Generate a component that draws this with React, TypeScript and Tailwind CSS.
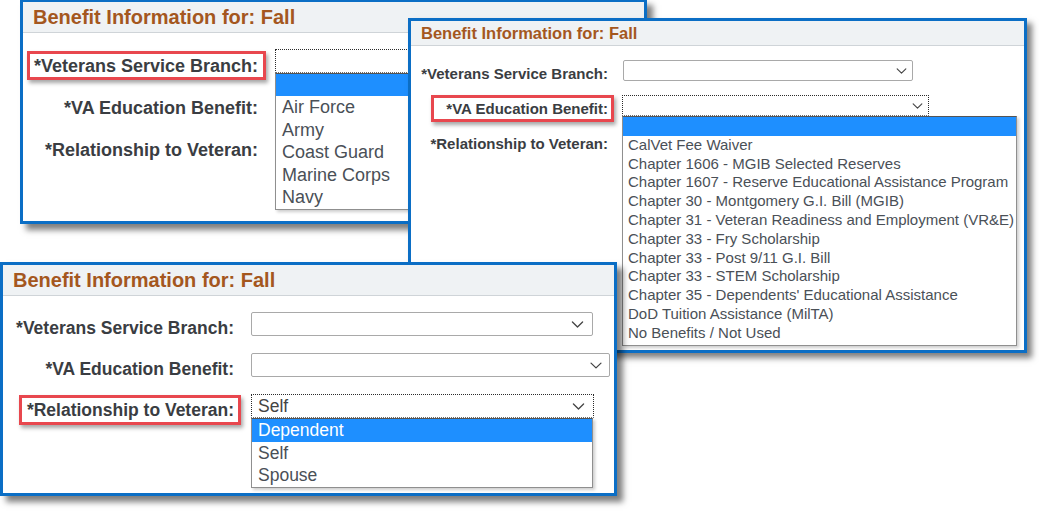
import React from 'react';

type LabelProps = {
  text: string;
  textClass: string;
  boxClass?: string;
};

// label text, optionally wrapped in the red callout box
const Label = ({ text, textClass, boxClass }: LabelProps) => (
  <span className={`relative inline-block font-bold text-[#3a3d42] whitespace-nowrap ${textClass}`}>
    {boxClass && (
      <span
        className={`absolute border-[3px] border-[#e8474e] shadow-[2px_3px_4px_rgba(0,0,0,0.35)] ${boxClass}`}
      />
    )}
    {text}
  </span>
);

const Chevron = ({ className }: { className: string }) => (
  <svg viewBox="0 0 14 8" className={className} fill="none">
    <polyline
      points="1.2,1.2 7,6.8 12.8,1.2"
      stroke="#444"
      strokeWidth="1.5"
      strokeLinecap="round"
      strokeLinejoin="round"
    />
  </svg>
);

type SelectProps = {
  className: string;
  focused?: boolean;
  value?: string;
  valueClass?: string;
  chevronClass: string;
};

const Select = ({ className, focused, value, valueClass, chevronClass }: SelectProps) => (
  <div
    className={`flex items-center justify-between bg-white ${
      focused ? 'border border-dotted border-[#2b2b2b] border-b-[#6b6b6b]' : 'border border-[#a9a9a9] rounded-[2px]'
    } ${className}`}
  >
    <span className={`text-[#444] ${valueClass ?? ''}`}>{value}</span>
    <Chevron className={chevronClass} />
  </div>
);

type ListProps = {
  items: string[];
  selected: string;
  className: string;
  rowClass: string;
};

const DropList = ({ items, selected, className, rowClass }: ListProps) => (
  <div
    className={`absolute left-0 z-10 bg-white border border-[#8f8f8f] border-t-[#555] shadow-[2px_2px_3px_rgba(0,0,0,0.2)] ${className}`}
  >
    <div className={`bg-[#1e8fff] text-white ${rowClass}`}>{selected || '\u00a0'}</div>
    {items.map((it, i) => (
      <div key={i} className={`text-[#4a5057] ${rowClass}`}>
        {it}
      </div>
    ))}
  </div>
);

const BENEFITS = [
  'CalVet Fee Waiver',
  'Chapter 1606 - MGIB Selected Reserves',
  'Chapter 1607 - Reserve Educational Assistance Program',
  'Chapter 30 - Montgomery G.I. Bill (MGIB)',
  'Chapter 31 - Veteran Readiness and Employment (VR&E)',
  'Chapter 33 - Fry Scholarship',
  'Chapter 33 - Post 9/11 G.I. Bill',
  'Chapter 33 - STEM Scholarship',
  "Chapter 35 - Dependents' Educational Assistance",
  'DoD Tuition Assistance (MilTA)',
  'No Benefits / Not Used',
];

export default function App() {
  return (
    <div className="relative w-[1039px] h-[512px] overflow-hidden bg-white font-['Liberation_Sans',Arial,sans-serif]">
      {/* panel 1 - branch list open */}
      <div className="absolute isolate left-[20px] top-[-1px] w-[627px] h-[225px] border-[3px] border-[#0b6ec5] bg-white shadow-[6px_6px_6px_rgba(0,0,0,0.5)]">
        <div className="h-[31px] bg-[#eff2f4] border-b border-[#cfd4d8] pl-[10px] flex items-center">
          <span className="text-[20px] font-bold text-[#a4571e]">Benefit Information for: Fall</span>
        </div>
        <div className="pt-[16px] flex flex-col gap-[18px]">
          <div className="flex h-[24px]">
            <div className="w-[235px] shrink-0 text-right mt-[6px]">
              <Label
                text="*Veterans Service Branch:"
                textClass="text-[18px] leading-[20px]"
                boxClass="left-[-7px] right-[-8px] top-[-5px] bottom-[-4px]"
              />
            </div>
            <div className="relative ml-[17px]">
              <Select focused className="w-[330px] h-[24px]" chevronClass="w-[13px] h-[7px] mr-[8px]" />
              <DropList
                items={['Air Force', 'Army', 'Coast Guard', 'Marine Corps', 'Navy']}
                selected=""
                className="top-[24px] w-[330px] pb-[1px]"
                rowClass="h-[22.4px] leading-[22.4px] text-[18px] pl-[6px]"
              />
            </div>
          </div>
          <div className="flex h-[24px]">
            <div className="w-[235px] shrink-0 text-right mt-[6px]">
              <Label text="*VA Education Benefit:" textClass="text-[18px] leading-[20px]" />
            </div>
          </div>
          <div className="flex h-[24px]">
            <div className="w-[235px] shrink-0 text-right mt-[6px]">
              <Label text="*Relationship to Veteran:" textClass="text-[18px] leading-[20px]" />
            </div>
          </div>
        </div>
      </div>

      {/* panel 2 - education benefit list open */}
      <div className="absolute isolate left-[408px] top-[18px] w-[619px] h-[335px] border-[3px] border-[#0b6ec5] bg-white shadow-[5px_5px_6px_rgba(0,0,0,0.5)]">
        <div className="h-[25px] bg-[#eff2f4] border-b border-[#cfd4d8] pl-[10px] flex items-center">
          <span className="text-[16.5px] font-bold text-[#a4571e]">Benefit Information for: Fall</span>
        </div>
        <div className="pt-[14px] flex flex-col gap-[14px]">
          <div className="flex h-[21px]">
            <div className="w-[197px] shrink-0 text-right mt-[2px]">
              <Label text="*Veterans Service Branch:" textClass="text-[15px] leading-[18px]" />
            </div>
            <div className="ml-[15px]">
              <Select className="w-[290px] h-[21px]" chevronClass="w-[11px] h-[6px] mr-[5px]" />
            </div>
          </div>
          <div className="flex h-[21px]">
            <div className="w-[197px] shrink-0 text-right mt-[2px]">
              <Label
                text="*VA Education Benefit:"
                textClass="text-[15px] leading-[18px]"
                boxClass="left-[-15px] right-[-6px] top-[-5px] bottom-[-4px]"
              />
            </div>
            <div className="relative ml-[14px]">
              <Select focused className="w-[307px] h-[21px]" chevronClass="w-[11px] h-[6px] mr-[5px]" />
              <DropList
                items={BENEFITS}
                selected=""
                className="top-[21px] w-[395px] pb-[2px]"
                rowClass="h-[18.8px] leading-[18.8px] text-[15px] pl-[5px] whitespace-nowrap"
              />
            </div>
          </div>
          <div className="flex h-[21px]">
            <div className="w-[197px] shrink-0 text-right mt-[2px]">
              <Label text="*Relationship to Veteran:" textClass="text-[15px] leading-[18px]" />
            </div>
          </div>
        </div>
      </div>

      {/* panel 3 - relationship list open */}
      <div className="absolute isolate left-0 top-[262px] w-[617px] h-[234px] border-[3px] border-[#0b6ec5] bg-white shadow-[6px_6px_6px_rgba(0,0,0,0.5)]">
        <div className="h-[31px] bg-[#eff2f4] border-b border-[#cfd4d8] pl-[10px] flex items-center">
          <span className="text-[20px] font-bold text-[#a4571e]">Benefit Information for: Fall</span>
        </div>
        <div className="pt-[16px] flex flex-col gap-[17px]">
          <div className="flex h-[24px]">
            <div className="w-[231px] shrink-0 text-right mt-[5px]">
              <Label text="*Veterans Service Branch:" textClass="text-[17.5px] leading-[20px]" />
            </div>
            <div className="ml-[17px]">
              <Select className="w-[342px] h-[24px]" chevronClass="w-[13px] h-[7px] mr-[8px]" />
            </div>
          </div>
          <div className="flex h-[24px]">
            <div className="w-[231px] shrink-0 text-right mt-[5px]">
              <Label text="*VA Education Benefit:" textClass="text-[17.5px] leading-[20px]" />
            </div>
            <div className="ml-[17px]">
              <Select className="w-[359px] h-[24px]" chevronClass="w-[12px] h-[7px] mr-[7px]" />
            </div>
          </div>
          <div className="flex h-[24px]">
            <div className="w-[231px] shrink-0 text-right mt-[5px]">
              <Label
                text="*Relationship to Veteran:"
                textClass="text-[17.5px] leading-[20px]"
                boxClass="left-[-8px] right-[-7px] top-[-5px] bottom-[-5px]"
              />
            </div>
            <div className="relative ml-[17px]">
              <Select
                focused
                value="Self"
                valueClass="text-[17.5px] pl-[6px]"
                className="w-[343px] h-[24px]"
                chevronClass="w-[13px] h-[7px] mr-[8px]"
              />
              <DropList
                items={['Self', 'Spouse']}
                selected="Dependent"
                className="top-[24px] w-[342px]"
                rowClass="h-[22.5px] leading-[22.5px] text-[17.5px] pl-[6px]"
              />
            </div>
          </div>
        </div>
      </div>
    </div>
  );
}
